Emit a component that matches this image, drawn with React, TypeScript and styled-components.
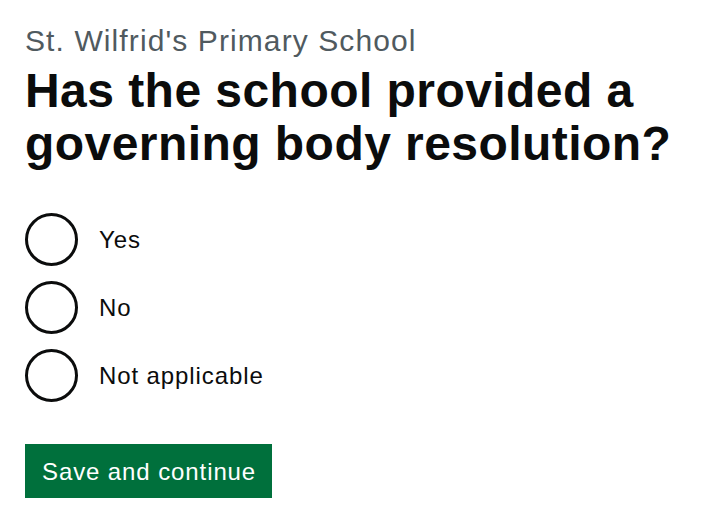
import React from "react";
import styled, { createGlobalStyle } from "styled-components";

const GlobalStyle = createGlobalStyle`
  html, body { margin: 0; padding: 0; background: #ffffff; }
  body { font-family: "Liberation Sans", Arial, sans-serif; color: #0b0c0c; }
`;

const Page = styled.main`
  padding: 22px 25px 0 25px;
`;

const Caption = styled.span`
  display: block;
  font-size: 30px;
  line-height: 38px;
  letter-spacing: 1.1px;
  color: #505a5f;
`;

const Heading = styled.h1`
  margin: 4px 0 0 0;
  font-size: 48px;
  line-height: 53px;
  letter-spacing: 0.45px;
  font-weight: 700;
  color: #0b0c0c;
`;

const Fieldset = styled.fieldset`
  margin: 43px 0 0 0;
  padding: 0;
  border: 0;
  display: flex;
  flex-direction: column;
  gap: 15px;
`;

const RadioItem = styled.label`
  display: flex;
  align-items: center;
  gap: 21px;
  min-height: 53px;
  cursor: pointer;
`;

const Circle = styled.span`
  box-sizing: border-box;
  width: 53px;
  height: 53px;
  flex: none;
  border: 3px solid #0b0c0c;
  border-radius: 50%;
  background: #ffffff;
`;

const HiddenInput = styled.input`
  position: absolute;
  opacity: 0;
  width: 0;
  height: 0;
`;

const RadioLabel = styled.span`
  font-size: 24px;
  line-height: 30px;
  letter-spacing: 0.9px;
  color: #0b0c0c;
`;

const Button = styled.button`
  margin-top: 42px;
  font-family: "Liberation Sans", Arial, sans-serif;
  font-size: 24px;
  line-height: 24px;
  letter-spacing: 0.9px;
  color: #ffffff;
  background: #00703c;
  border: 0;
  border-radius: 0;
  padding: 16px 16px 14px 17px;
  box-shadow: 0 3px 0 #002d18;
  cursor: pointer;
`;

const options = ["Yes", "No", "Not applicable"];

export default function App() {
  return (
    <>
      <GlobalStyle />
      <Page>
        <Caption>St. Wilfrid's Primary School</Caption>
        <Heading>
          Has the school provided a<br />
          governing body resolution?
        </Heading>
        <Fieldset>
          {options.map((o) => (
            <RadioItem key={o}>
              <HiddenInput type="radio" name="resolution" value={o} />
              <Circle />
              <RadioLabel>{o}</RadioLabel>
            </RadioItem>
          ))}
        </Fieldset>
        <Button type="button">Save and continue</Button>
      </Page>
    </>
  );
}
